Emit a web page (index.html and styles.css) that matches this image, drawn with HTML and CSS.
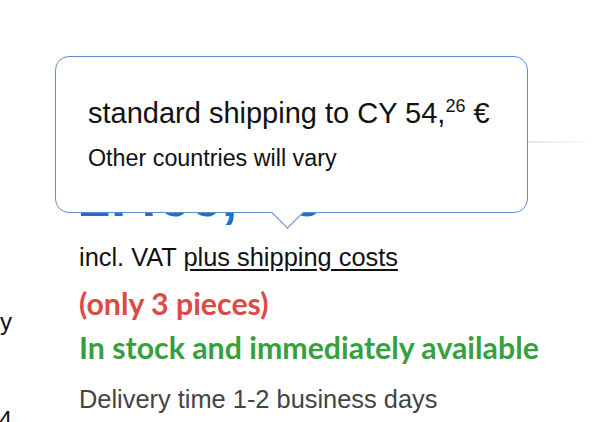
FILE: index.html
```html
<!DOCTYPE html>
<html lang="en">
<head>
  <meta charset="UTF-8">
  <meta name="viewport" content="width=device-width, initial-scale=1.0">
  <title>Product - Availability</title>
  <link rel="stylesheet" href="styles.css">
</head>
<body>
  <div class="page">
    <!-- left column, mostly scrolled out of view -->
    <div class="side">
      <div class="side-row side-avail"><span>Availability</span></div>
      <div class="side-row side-sku"><span>Item no. 10004</span></div>
    </div>

    <!-- product info -->
    <div class="product">
      <div class="divider"></div>

      <div class="price">2.466,<sup>00</sup> €</div>

      <p class="tax">incl. VAT <a href="#" class="shipping-link">plus shipping costs</a></p>

      <p class="stock-low">(only 3 pieces)</p>
      <p class="stock-ok">In stock and immediately available</p>
      <p class="delivery">Delivery time 1-2 business days</p>
    </div>

    <!-- shipping tooltip -->
    <div class="tooltip">
      <div class="tooltip-title">standard shipping to CY 54,<sup>26</sup> €</div>
      <div class="tooltip-note">Other countries will vary</div>
    </div>
  </div>
</body>
</html>
```

FILE: styles.css
```css
body {
  font-family: 'Liberation Sans', Arial, sans-serif;
  margin: 0;
  padding: 0;
  background-color: #fff;
  color: #111;
  overflow: hidden;
}

.page {
  position: relative;
  display: flex;
  height: 422px;
}

sup {
  line-height: 0;
}

p {
  margin: 0;
}

.side {
  width: 12px;
  flex-shrink: 0;
  padding-top: 308px;
  font-size: 24px;
  color: #111;
}

.side-row {
  display: flex;
  justify-content: flex-end;
  white-space: nowrap;
  height: 28px;
  line-height: 28px;
}

.side-sku {
  margin-top: 70px;
}

.product {
  margin-left: 67px;
  flex: 1;
  padding-top: 141px;
}

.divider {
  height: 2px;
  width: 516px;
  background: linear-gradient(to right, #d6d6d6 80%, rgba(214, 214, 214, 0));
}

.price {
  margin-top: 30px;
  font-size: 57px;
  font-weight: bold;
  color: #1f6fd1;
  line-height: 46px;
  white-space: nowrap;
}

.price sup {
  font-size: 32px;
}

.tax {
  margin-top: 23px;
  font-size: 25.4px;
  line-height: 30px;
  color: #111;
}

.shipping-link {
  color: #111;
  text-decoration: underline;
  text-underline-offset: 3px;
}

.stock-low,
.stock-ok {
  font-family: Lato, 'Open Sans', sans-serif;
  font-weight: bold;
  font-size: 30.3px;
  line-height: 44px;
}

.stock-low {
  margin-top: 9px;
  color: #dc4a47;
}

.stock-ok {
  color: #37a03e;
}

.delivery {
  margin-top: 14px;
  font-size: 25.4px;
  line-height: 32px;
  color: #444;
}

.tooltip {
  position: absolute;
  left: 55px;
  top: 56px;
  width: 473px;
  height: 157px;
  box-sizing: border-box;
  padding: 39px 32px 0;
  background: #fff;
  border: 1.5px solid #5b8fd2;
  border-radius: 14px;
}

.tooltip:after {
  content: "";
  position: absolute;
  left: 220px;
  bottom: -11.5px;
  width: 23px;
  height: 23px;
  box-sizing: border-box;
  background: #fff;
  border-right: 1.5px solid #5b8fd2;
  border-bottom: 1.5px solid #5b8fd2;
  transform: rotate(45deg);
}

.tooltip-title {
  font-size: 29px;
  line-height: 34px;
  white-space: nowrap;
}

.tooltip-title sup {
  font-size: 18px;
}

.tooltip-note {
  margin-top: 15px;
  font-size: 23.3px;
  line-height: 26px;
}
```
